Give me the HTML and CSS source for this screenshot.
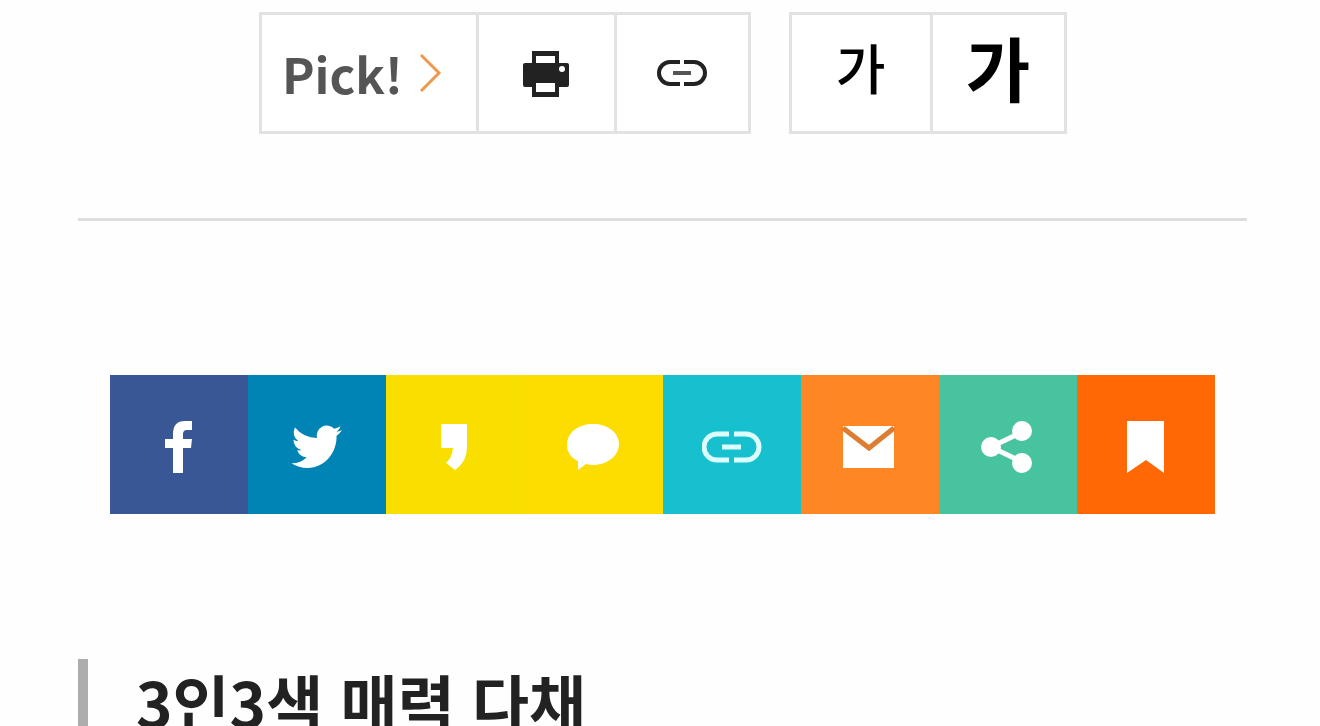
FILE: index.html
```html
<!DOCTYPE html>
<html lang="ko">
<head>
<meta charset="utf-8">
<meta name="viewport" content="width=device-width, initial-scale=1">
<title>3인3색 매력 다채</title>
<link rel="stylesheet" href="styles.css">
</head>
<body>
<main class="article">
  <div class="toolbar">
    <div class="group">
      <a class="tool pick" href="#">Pick!
        <svg class="chevron" viewBox="0 0 24 40" aria-hidden="true"><path d="M2 3 20 21 2 39"/></svg>
      </a>
      <button class="tool print" type="button" aria-label="인쇄">
        <svg class="icon" viewBox="0 0 60 60" aria-hidden="true">
          <path fill="#222" d="M16 8H43V20H51Q53 20 53 22V42Q53 44 51 44H43V54H16V44H9Q7 44 7 42V22Q7 20 9 20H16Z"/>
          <path fill="#fff" d="M20 13H39V20H20ZM20 40H39V49H20Z"/>
          <circle cx="46" cy="26" r="3" fill="#fff"/>
        </svg>
      </button>
      <button class="tool copy" type="button" aria-label="링크 복사">
        <svg class="icon" viewBox="0 0 60 60" aria-hidden="true">
          <path fill="none" stroke="#222" stroke-width="4" d="M28 19H18A11 11 0 0 0 18 41H28M32 19H42A11 11 0 0 1 42 41H32"/>
          <path fill="none" stroke="#555" stroke-width="4" d="M21 30H39"/>
        </svg>
      </button>
    </div>
    <div class="group">
      <button class="tool letter small-text" type="button" aria-label="글자 작게">가</button>
      <button class="tool letter large-text" type="button" aria-label="글자 크게">가</button>
    </div>
  </div>
  <hr class="rule">
  <nav class="share" aria-label="공유">
    <a class="tile facebook" href="#" aria-label="페이스북"><svg class="icon" viewBox="0 0 60 60" aria-hidden="true"><path d="M24 56V31H16V22H24V17Q24 4 36 4H43V13H38Q34 13 34 17V22H43L42 31H34V56Z"/></svg></a>
    <a class="tile twitter" href="#" aria-label="트위터"><svg class="icon" viewBox="0 0 24 24" aria-hidden="true"><path d="M22 5.300c-.7.3-1.500.5-2.300.6.8-.5 1.400-1.200 1.700-2.200-.8.5-1.600.8-2.500 1a4.050 4.050 0 0 0-6.900 3.700A11.500 11.500 0 0 1 3.200 4.200a4.050 4.050 0 0 0 1.300 5.400c-.7 0-1.300-.2-1.900-.5 0 2 1.400 3.700 3.300 4.100-.6.2-1.200.2-1.800.1.500 1.600 2 2.800 3.800 2.800A8.200 8.200 0 0 1 1.800 18.500a11.500 11.500 0 0 0 6.300 1.900c7.600 0 12-6.900 11.700-12.900.9-.6 1.600-1.300 2.200-2.200z"/></svg></a>
    <a class="tile story" href="#" aria-label="카카오스토리"><svg class="icon" viewBox="0 0 60 60" aria-hidden="true"><path d="M16 7H42V30Q42 45 30 53L21 46Q27 41 28 31H16Z"/></svg></a>
    <a class="tile talk" href="#" aria-label="카카오톡"><svg class="icon" viewBox="0 0 60 60" aria-hidden="true"><path d="M30 7C44 7 56 15 56 27S44 48 30 48Q26 48 23 47L15 53V44C8 41 4 35 4 28C4 15 16 7 30 7Z"/></svg></a>
    <a class="tile link" href="#" aria-label="링크"><svg class="icon" viewBox="0 0 60 60" aria-hidden="true"><path class="line" d="M27 17H15A13 13 0 0 0 15 43H27M32 17H44A13 13 0 0 1 44 43H32M20 30H39"/></svg></a>
    <a class="tile mail" href="#" aria-label="메일"><svg class="icon" viewBox="0 0 60 60" aria-hidden="true"><path d="M3 9H54V51H3Z"/><path class="fold" d="M3 11 29 31 54 11"/></svg></a>
    <a class="tile more" href="#" aria-label="더보기"><svg class="icon" viewBox="0 0 60 60" aria-hidden="true"><path class="line" d="M44 15 13 30 44 45"/><circle cx="44" cy="14" r="10"/><circle cx="13" cy="30" r="10"/><circle cx="44" cy="46" r="10"/></svg></a>
    <a class="tile bookmark" href="#" aria-label="북마크"><svg class="icon" viewBox="0 0 60 60" aria-hidden="true"><path d="M11 4H48V56L30 43 11 56Z"/></svg></a>
  </nav>
  <h2 class="summary">3인3색 매력 다채</h2>
</main>
</body>
</html>
```
FILE: styles.css
```css
* { box-sizing: border-box; }
body {
  margin: 0;
  background: #fefefe;
  color: #222;
  font-family: "Noto Sans CJK KR", "Noto Sans", sans-serif;
  overflow: hidden;
}
.article { padding: 12px 73px 0 78px; }
.toolbar { display: flex; justify-content: center; gap: 38px; }
.group {
  display: flex;
  height: 122px;
  border: 3px solid #e2e2e2;
  background: #fff;
}
.tool {
  display: flex;
  align-items: center;
  justify-content: center;
  width: 138px;
  padding: 0;
  border: 0;
  background: none;
  color: #000;
  font-family: inherit;
  line-height: 1;
  text-decoration: none;
}
.tool + .tool { border-left: 3px solid #e2e2e2; }
.pick {
  gap: 16px;
  width: 214px;
  padding: 0 12px 2px 0;
  color: #555;
  font-size: 49px;
  font-weight: 700;
}
.chevron {
  width: 24px;
  height: 40px;
  fill: none;
  stroke: #ee9850;
  stroke-width: 3;
}
.copy, .large-text { width: 134px; }
.letter { padding-bottom: 12px; }
.small-text { font-size: 54px; font-weight: 500; }
.large-text { font-size: 70px; font-weight: 700; }
.icon { display: block; width: 60px; height: 60px; }
.rule {
  height: 3px;
  margin: 84px 0 0;
  border: 0;
  background: #dedede;
}
.share {
  display: flex;
  margin: 154px 32px 0;
}
.tile {
  display: flex;
  flex: 1;
  align-items: center;
  justify-content: center;
  height: 139px;
  padding-top: 4px;
}
.tile .icon { fill: #fff; }
.tile .line { fill: none; stroke: #fff; stroke-width: 5; }
.link .line { stroke: #dcffff; }
.tile .fold { fill: none; stroke: #dc7d32; stroke-width: 5; }
.facebook { background: #3a5795; }
.twitter { background: #0084b6; }
.story { background: #f9df00; }
.talk { background: #fddc00; }
.link { background: #17c0ce; }
.mail { background: #ff8624; }
.more { background: #48c39f; }
.bookmark { background: #ff6804; }
.summary {
  margin: 145px 0 0;
  padding: 0 0 0 48px;
  border-left: 10px solid #adadad;
  font-size: 62px;
  font-weight: 700;
  line-height: 84px;
}
```
